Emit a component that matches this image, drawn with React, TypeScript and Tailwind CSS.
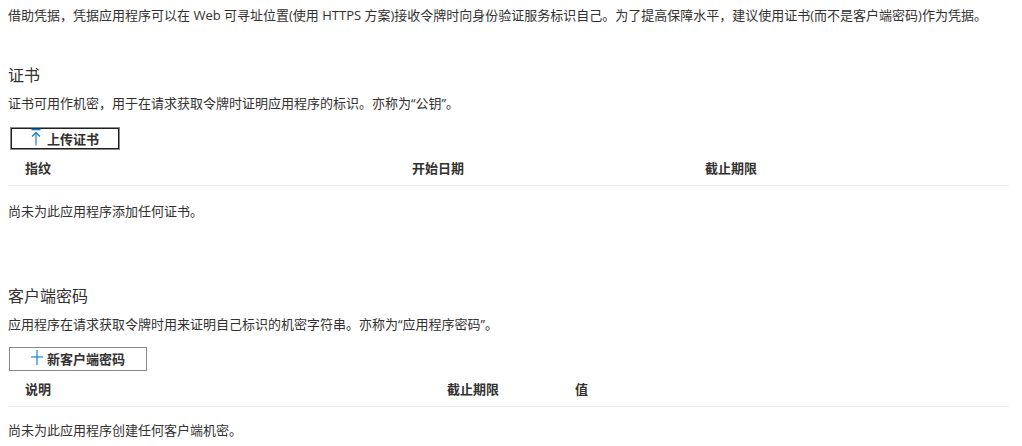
import React from "react";

const FONT = "font-['Segoe_UI','Open_Sans','Noto_Sans_CJK_SC',sans-serif]";

function UploadIcon() {
  return (
    <svg width="10" height="14" viewBox="0 0 10 14" className="overflow-visible shrink-0" fill="none" stroke="#0078d4" strokeWidth="1.1">
      <path d="M0.5 -2.5H9.5" strokeWidth="1.6" />
      <path d="M5 0.5V13.5" />
      <path d="M1 4.5L5 0.5L9 4.5" />
    </svg>
  );
}

function PlusIcon() {
  return (
    <svg width="12" height="15" viewBox="0 0 12 15" className="shrink-0 -mt-[4px]" fill="none" stroke="#0078d4" strokeWidth="1.1">
      <path d="M6 0V15" />
      <path d="M0 7H12" />
    </svg>
  );
}

type Col = { label: string };

function Section(props: {
  title: string;
  desc: string;
  button: React.ReactNode;
  buttonGap: string;
  cols: Col[];
  grid: string;
  empty: string;
  emptyGap: string;
  className: string;
}) {
  return (
    <section className={props.className}>
      <h2 className="text-[16px] leading-[22px] font-normal">{props.title}</h2>
      <p className="mt-[7px]">{props.desc}</p>
      <div className={props.buttonGap}>{props.button}</div>
      <div className={`grid ${props.grid} h-[36px] w-[1001px] items-center border-b border-[#edebe9]`}>
        {props.cols.map((c) => (
          <div key={c.label} className="pl-[17px] font-semibold">{c.label}</div>
        ))}
      </div>
      <p className={props.emptyGap}>{props.empty}</p>
    </section>
  );
}

export default function App() {
  return (
    <div className={`${FONT} bg-white w-[1022px] h-[446px] overflow-hidden px-[8px] text-[13px] leading-[20px] text-[#323130]`}>
      <p className="pt-[5px] whitespace-nowrap">
        借助凭据，凭据应用程序可以在 Web 可寻址位置(使用 HTTPS 方案)接收令牌时向身份验证服务标识自己。为了提高保障水平，建议使用证书(而不是客户端密码)作为凭据。
      </p>

      <Section
        className="mt-[39px]"
        title="证书"
        desc="证书可用作机密，用于在请求获取令牌时证明应用程序的标识。亦称为“公钥”。"
        buttonGap="mt-[14px]"
        button={
          <button className="ml-[2px] w-[110px] h-[23px] flex items-center justify-center gap-[6px] border border-[#8a8886] shadow-[inset_0_0_0_1px_#201f1e] bg-white font-semibold text-[#323130]">
            <UploadIcon />
            <span>上传证书</span>
          </button>
        }
        grid="grid-cols-[387px_293px_1fr]"
        cols={[{ label: "指纹" }, { label: "开始日期" }, { label: "截止期限" }]}
        empty="尚未为此应用程序添加任何证书。"
        emptyGap="mt-[15px]"
      />

      <Section
        className="mt-[64px]"
        title="客户端密码"
        desc="应用程序在请求获取令牌时用来证明自己标识的机密字符串。亦称为“应用程序密码”。"
        buttonGap="mt-[13px]"
        button={
          <button className="ml-[1px] w-[138px] h-[24px] flex items-center justify-center gap-[4px] border border-[#8a8886] bg-white font-semibold text-[#323130]">
            <PlusIcon />
            <span>新客户端密码</span>
          </button>
        }
        grid="grid-cols-[422px_128px_1fr]"
        cols={[{ label: "说明" }, { label: "截止期限" }, { label: "值" }]}
        empty="尚未为此应用程序创建任何客户端机密。"
        emptyGap="mt-[13px]"
      />
    </div>
  );
}
